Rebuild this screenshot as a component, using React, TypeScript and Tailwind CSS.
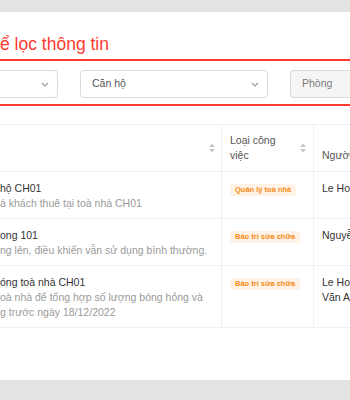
import React from "react";

const SortIcon = () => (
  <svg width="6" height="10" viewBox="0 0 6 10" className="shrink-0">
    <polygon points="0,4 3,0.5 6,4" fill="#c8c8cc" />
    <polygon points="0,6 3,9.5 6,6" fill="#c8c8cc" />
  </svg>
);

const Chevron = () => (
  <svg width="8" height="5" viewBox="0 0 8 5" className="shrink-0">
    <path d="M1 1 L4 4 L7 1" fill="none" stroke="#9a9a9a" strokeWidth="1.1" />
  </svg>
);

const Tag = ({ children }: { children: React.ReactNode }) => (
  <span className="inline-block mt-[2px] h-[12px] leading-[12px] px-[5px] rounded-[3px] bg-[#fff2e6] text-[#fa8c16] text-[7.5px] font-bold whitespace-nowrap">
    {children}
  </span>
);

export default function App() {
  return (
    <div className="w-[350px] h-[400px] overflow-hidden bg-[#e3e4e3] flex flex-col font-['Liberation_Sans',Arial,sans-serif]">
      <div className="h-[12px] shrink-0" />
      <div className="bg-white h-[368px] shrink-0 flex flex-col overflow-hidden">
        <div className="h-[47px] pt-[21px] text-[17.5px] leading-[22px] text-[#ff3b30] whitespace-nowrap">
          ể lọc thông tin
        </div>
        <div className="border-y-2 border-[#ff3b30] pt-[9px] pb-[6px]">
          <div className="flex gap-[22px] -ml-[130px] text-[10.5px]">
            <div className="w-[188px] h-[28px] shrink-0 rounded-[4px] border border-[#d9d9d9] flex items-center justify-end pr-[8px]">
              <Chevron />
            </div>
            <div className="w-[188px] h-[28px] shrink-0 rounded-[4px] border border-[#d9d9d9] flex items-center justify-between pl-[11px] pr-[8px] text-[#555]">
              <span>Căn hộ</span>
              <Chevron />
            </div>
            <div className="w-[188px] h-[28px] shrink-0 rounded-[4px] border border-[#d9d9d9] bg-[#f5f5f5] flex items-center pl-[11px] text-[#7a7a7a]">
              <span>Phòng</span>
            </div>
          </div>
        </div>
        <div className="mt-[18px] text-[10.5px] leading-[15px]">
          {/* header */}
          <div className="flex border-y border-[#efeff4] text-[#555]">
            <div className="w-[222px] shrink-0 border-r border-[#efeff4] flex items-center justify-end pr-[6px]">
              <SortIcon />
            </div>
            <div className="w-[92px] shrink-0 border-r border-[#efeff4] flex items-center justify-between pl-[8px] pr-[7px] py-[8px]">
              <span>
                Loại công
                <br />
                việc
              </span>
              <SortIcon />
            </div>
            <div className="w-[80px] shrink-0 flex items-end pl-[8px] py-[8px] whitespace-nowrap">
              Người thực hiện
            </div>
          </div>
          {/* row 1 */}
          <div className="flex border-b border-[#efeff4]">
            <div className="w-[222px] shrink-0 border-r border-[#efeff4] pt-[9px] pb-[7px] pr-[8px] whitespace-nowrap">
              <div className="text-[#333]">hộ CH01</div>
              <div className="text-[#9a9a9a]">á khách thuê tại toà nhà CH01</div>
            </div>
            <div className="w-[92px] shrink-0 border-r border-[#efeff4] pl-[8px] pt-[9px]">
              <Tag>Quản lý toà nhà</Tag>
            </div>
            <div className="w-[80px] shrink-0 pl-[8px] pt-[9px] text-[#333]">Le Hoàng</div>
          </div>
          {/* row 2 */}
          <div className="flex border-b border-[#efeff4]">
            <div className="w-[222px] shrink-0 border-r border-[#efeff4] pt-[9px] pb-[7px] pr-[8px] whitespace-nowrap overflow-hidden">
              <div className="text-[#333]">ong 101</div>
              <div className="text-[#9a9a9a]">ng lên, điều khiển vẫn sử dụng bình thường.</div>
            </div>
            <div className="w-[92px] shrink-0 border-r border-[#efeff4] pl-[8px] pt-[9px]">
              <Tag>Bảo trì sửa chữa</Tag>
            </div>
            <div className="w-[80px] shrink-0 pl-[8px] pt-[9px] text-[#333] whitespace-nowrap">Nguyễn Thị</div>
          </div>
          {/* row 3 */}
          <div className="flex border-b border-[#efeff4]">
            <div className="w-[222px] shrink-0 border-r border-[#efeff4] pt-[9px] pb-[7px] pr-[8px] whitespace-nowrap overflow-hidden">
              <div className="text-[#333]">óng toà nhà CH01</div>
              <div className="text-[#9a9a9a]">oà nhà để tổng hợp số lượng bóng hỏng và</div>
              <div className="text-[#9a9a9a]">g trước ngày 18/12/2022</div>
            </div>
            <div className="w-[92px] shrink-0 border-r border-[#efeff4] pl-[8px] pt-[9px]">
              <Tag>Bảo trì sửa chữa</Tag>
            </div>
            <div className="w-[80px] shrink-0 pl-[8px] pt-[9px] text-[#333]">
              Le Hoàng
              <br />
              Văn An
            </div>
          </div>
        </div>
      </div>
    </div>
  );
}
